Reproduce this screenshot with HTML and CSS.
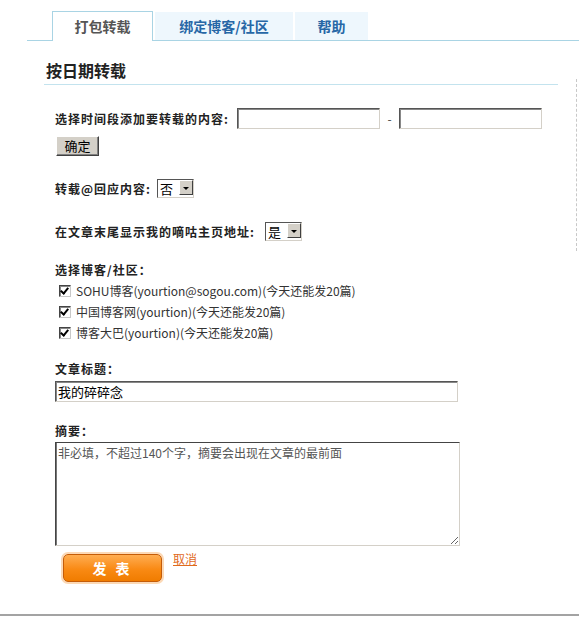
FILE: index.html
```html
<!DOCTYPE html>
<html lang="zh-CN">
<head>
  <meta charset="UTF-8">
  <title>打包转载</title>
  <link rel="stylesheet" href="styles.css">
</head>
<body>
  <div class="page">
    <div class="tabs">
      <a class="tab active" href="#">打包转载</a>
      <a class="tab" href="#">绑定博客/社区</a>
      <a class="tab" href="#">帮助</a>
    </div>

    <div class="content">
      <div class="main">
        <h2>按日期转载</h2>
        <form class="form">
          <div class="row range">
            <label>选择时间段添加要转载的内容:</label>
            <input type="text" class="txt date">
            <span class="dash">-</span>
            <input type="text" class="txt date">
          </div>
          <button type="button" class="btn-ok">确定</button>

          <div class="row pick">
            <label>转载@回应内容:</label>
            <div class="combo"><select><option>否</option><option>是</option></select></div>
          </div>

          <div class="row pick pick2">
            <label>在文章末尾显示我的嘀咕主页地址:</label>
            <div class="combo"><select><option>是</option><option>否</option></select></div>
          </div>

          <div class="caption">选择博客/社区：</div>
          <ul class="sites">
            <li><label><input type="checkbox" checked>SOHU博客(yourtion@sogou.com)(今天还能发20篇)</label></li>
            <li><label><input type="checkbox" checked>中国博客网(yourtion)(今天还能发20篇)</label></li>
            <li><label><input type="checkbox" checked>博客大巴(yourtion)(今天还能发20篇)</label></li>
          </ul>

          <div class="caption title-cap">文章标题：</div>
          <input type="text" class="txt title" value="我的碎碎念">

          <div class="caption summary-cap">摘要：</div>
          <textarea class="summary" placeholder="非必填，不超过140个字，摘要会出现在文章的最前面"></textarea>

          <div class="actions">
            <button type="button" class="btn-post">发 表</button>
            <a href="#" class="cancel">取消</a>
          </div>
        </form>
      </div>
      <div class="side"></div>
    </div>
  </div>
</body>
</html>
```

FILE: styles.css
```css
body {
  margin: 0;
  font-family: "Noto Sans CJK SC", "Liberation Sans", sans-serif;
  font-size: 12px;
  color: #222;
  background: #fff;
}

.page {
  min-height: 614px;
  border-bottom: 2px solid #a3a3a3;
  box-sizing: content-box;
  overflow: hidden;
}

/* tabs */
.tabs {
  display: flex;
  align-items: flex-end;
  margin: 12px 0 0 27px;
  padding-left: 25px;
  height: 28px;
  border-bottom: 1px solid #a9d4e4;
}

.tab {
  display: block;
  height: 28px;
  line-height: 28px;
  margin-right: 2px;
  background: #eef7fd;
  color: #2767a6;
  font-size: 14px;
  font-weight: bold;
  text-align: center;
  text-decoration: none;
}

.tab:nth-child(2) {
  width: 138px;
}

.tab:nth-child(3) {
  width: 73px;
}

.tab.active {
  width: 99px;
  height: 29px;
  margin-bottom: -1px;
  background: #fff;
  color: #555;
  border: 1px solid #a9d4e4;
  border-bottom: none;
}

/* content */
.content {
  display: flex;
  align-items: flex-start;
}

.main {
  margin-left: 44px;
  width: 514px;
}

.side {
  margin: 38px 0 0 18px;
  height: 172px;
  border-left: 1px dashed #c8c8c8;
}

h2 {
  margin: 19px 0 0;
  padding: 0 0 4px 2px;
  height: 20px;
  line-height: 20px;
  font-size: 16px;
  color: #222;
  border-bottom: 1px solid #c3e3ee;
}

.form {
  padding-left: 11px;
}

.row {
  display: flex;
  align-items: center;
}

.row label,
.caption {
  font-weight: bold;
  letter-spacing: 1px;
  color: #222;
}

.range {
  margin-top: 23px;
  height: 21px;
}

.range label {
  width: 182px;
}

.txt {
  box-sizing: border-box;
  height: 21px;
  margin: 0;
  padding: 1px 2px;
  border: 1px solid;
  border-color: #555 #d4d0c8 #d4d0c8 #555;
  box-shadow: inset 1px 1px 0 #888;
  font-family: "Noto Sans CJK SC", sans-serif;
  font-size: 13px;
  color: #000;
  outline: none;
}

.date {
  width: 143px;
}

.dash {
  width: 19px;
  text-align: center;
  color: #444;
}

.btn-ok {
  display: block;
  margin: 7px 0 0 1px;
  width: 43px;
  height: 20px;
  padding: 0;
  background: #d4d0c8;
  border: 1px solid;
  border-color: #fff #404040 #404040 #fff;
  box-shadow: inset -1px -1px 0 #808080;
  font-family: "Noto Sans CJK SC", sans-serif;
  font-size: 13px;
  line-height: 16px;
  color: #000;
}

.pick {
  margin-top: 23px;
  height: 19px;
}

.pick2 {
  margin-top: 24px;
}

.pick label {
  margin-right: 6px;
}

.pick2 label {
  margin-right: 10px;
}

.combo {
  position: relative;
  width: 37px;
  height: 19px;
}

.combo select {
  appearance: none;
  -webkit-appearance: none;
  box-sizing: border-box;
  width: 37px;
  height: 19px;
  margin: 0;
  padding: 0 0 0 2px;
  border: 1px solid;
  border-color: #555 #d4d0c8 #d4d0c8 #555;
  background: #fff;
  font-family: "Noto Sans CJK SC", sans-serif;
  font-size: 13px;
  line-height: 17px;
  color: #000;
  outline: none;
}

.combo::after {
  content: "";
  position: absolute;
  top: 1px;
  right: 1px;
  width: 14px;
  height: 15px;
  background: #d4d0c8;
  border: 1px solid;
  border-color: #fff #404040 #404040 #fff;
  box-sizing: border-box;
  pointer-events: none;
}

.combo::before {
  content: "";
  position: absolute;
  z-index: 1;
  top: 8px;
  right: 5px;
  border: 3px solid transparent;
  border-top: 3px solid #000;
  border-bottom: none;
  pointer-events: none;
}

.caption {
  margin-top: 19px;
  height: 20px;
  line-height: 20px;
}

.sites {
  list-style: none;
  margin: 0;
  padding: 0;
}

.sites li {
  height: 21px;
  line-height: 21px;
  color: #333;
}

.sites label {
  display: flex;
  align-items: center;
}

.sites input {
  appearance: none;
  -webkit-appearance: none;
  position: relative;
  box-sizing: border-box;
  width: 12px;
  height: 12px;
  margin: 0 5px 0 4px;
  background: #fff;
  border: 1px solid;
  border-color: #444 #c8c8c8 #c8c8c8 #444;
  box-shadow: inset 1px 1px 0 #888;
}

.sites input:checked::after {
  content: "";
  position: absolute;
  left: 2px;
  top: 0;
  width: 3px;
  height: 6px;
  border: solid #000;
  border-width: 0 2px 2px 0;
  transform: rotate(40deg);
}

.title-cap {
  margin-top: 16px;
}

.title {
  display: block;
  margin-top: 2px;
  width: 403px;
}

.summary-cap {
  margin-top: 19px;
}

.summary {
  display: block;
  box-sizing: border-box;
  width: 405px;
  height: 104px;
  margin: 1px 0 0;
  padding: 1px 2px;
  border: 1px solid;
  border-color: #444 #d4d0c8 #d4d0c8 #444;
  box-shadow: inset 1px 0 0 #777;
  font-family: "Noto Sans CJK SC", sans-serif;
  font-size: 12px;
  outline: none;
}

.summary::placeholder {
  color: #555;
}

.actions {
  display: flex;
  align-items: flex-start;
  margin-top: 8px;
}

.btn-post {
  width: 99px;
  height: 28px;
  margin-left: 8px;
  padding: 0;
  border: 1px solid #c45c08;
  border-radius: 5px;
  background: linear-gradient(#ffad52, #f98a14 55%, #f07c00);
  box-shadow: 0 0 0 2px #fcd9b6;
  color: #fff;
  font-family: "Noto Sans CJK SC", sans-serif;
  font-size: 14px;
  font-weight: bold;
  letter-spacing: 3px;
  cursor: pointer;
}

.cancel {
  margin: -3px 0 0 11px;
  color: #df6a1d;
  font-size: 12px;
  line-height: 16px;
}
```
